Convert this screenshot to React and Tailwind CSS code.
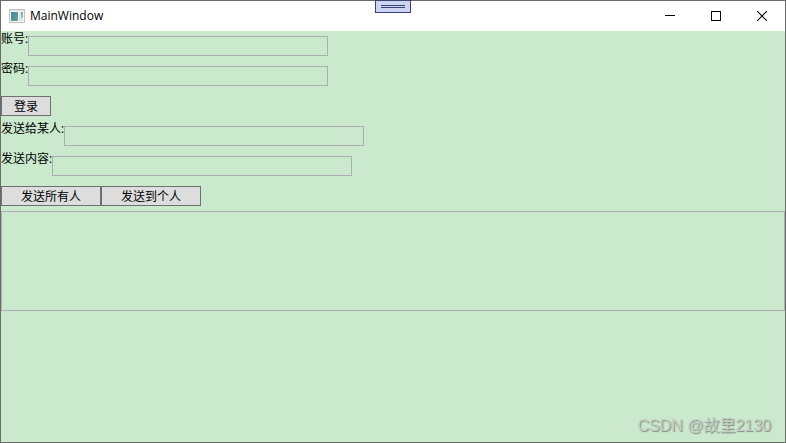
const FIELDS = {
  account:  { label: '账号:',       type: 'text' },
  password: { label: '密码:',       type: 'text' },
  receiver: { label: '发送给某人:', type: 'text' },
  content:  { label: '发送内容:',   type: 'text' },
}

function Field({ id }) {
  const { label, type } = FIELDS[id]
  return (
    <div className="flex items-start">
      <label htmlFor={id} className="shrink-0 leading-4">{label}</label>
      <input
        id={id}
        type={type}
        className="my-[5px] h-5 w-[300px] min-w-0 border border-[#abadb3] bg-transparent px-1 outline-none focus:border-[#569de5]"
      />
    </div>
  )
}

function PushButton({ className, children }) {
  return (
    <button
      type="button"
      className={`h-5 border border-[#707070] bg-[#dddddd] pt-px text-center leading-4 hover:bg-[#bee6fd] ${className}`}
    >
      {children}
    </button>
  )
}

function AppIcon() {
  return (
    <svg width="16" height="14" viewBox="0 0 16 14" shapeRendering="crispEdges" aria-hidden="true">
      <defs>
        <linearGradient id="pane" x1="0" y1="0" x2="1" y2="1">
          <stop offset="0" stopColor="#4a7fae" />
          <stop offset="1" stopColor="#62ad86" />
        </linearGradient>
        <linearGradient id="side" x1="0" y1="0" x2="0" y2="1">
          <stop offset="0" stopColor="#7d9fc0" />
          <stop offset="1" stopColor="#9cc8ac" />
        </linearGradient>
      </defs>
      <rect x="0.5" y="0.5" width="15" height="13" fill="#f6f6f6" stroke="#c0c2c4" />
      <rect x="1" y="1" width="14" height="1" fill="#dcdee0" />
      <rect x="2" y="3" width="7" height="9" fill="url(#pane)" />
      <rect x="10" y="3" width="4" height="9" fill="#dfe5e6" />
      <rect x="12" y="3" width="2" height="6" fill="url(#side)" />
    </svg>
  )
}

function TitleBar() {
  return (
    <header className="flex h-[30px] items-center bg-white">
      <div className="flex flex-1 items-center gap-[5px] pb-px pl-2">
        <AppIcon />
        <h1 className="text-xs leading-4">MainWindow</h1>
      </div>
      <button type="button" aria-label="Minimize" className="flex h-full w-[46px] items-center justify-center hover:bg-[#e5e5e5]">
        <svg width="10" height="10" viewBox="0 0 10 10" shapeRendering="crispEdges">
          <path d="M0 4.5h10" stroke="#000" />
        </svg>
      </button>
      <button type="button" aria-label="Maximize" className="flex h-full w-[46px] items-center justify-center hover:bg-[#e5e5e5]">
        <svg width="10" height="10" viewBox="0 0 10 10" shapeRendering="crispEdges">
          <rect x="0.5" y="0.5" width="9" height="9" fill="none" stroke="#000" />
        </svg>
      </button>
      <button type="button" aria-label="Close" className="flex h-full w-[46px] items-center justify-center hover:bg-[#e81123]">
        <svg width="10" height="10" viewBox="0 0 10 10">
          <path d="M0 0L10 10M10 0L0 10" stroke="#000" strokeWidth="1.1" />
        </svg>
      </button>
    </header>
  )
}

export default function App() {
  return (
    <div className="relative flex min-h-screen flex-col border border-[#6b6b6b] bg-[#cae9cd] font-['Open_Sans','Noto_Sans_CJK_SC',sans-serif] text-xs text-black">
      <TitleBar />

      {/* 调试工具栏手柄 */}
      <div className="absolute -top-px left-1/2 flex h-[13px] w-9 -translate-x-1/2 flex-col items-center justify-center gap-px border border-[#3b4479] bg-[#ccd5f0]">
        <span className="h-px w-6 bg-[#3b4479]" />
        <span className="h-px w-6 bg-[#3b4479]" />
      </div>

      <main className="flex flex-1 flex-col">
        <Field id="account" />
        <Field id="password" />
        <div className="flex py-[5px]">
          <PushButton className="w-[50px]">登录</PushButton>
        </div>
        <Field id="receiver" />
        <Field id="content" />
        <div className="flex py-[5px]">
          <PushButton className="w-[100px]">发送所有人</PushButton>
          <PushButton className="w-[100px]">发送到个人</PushButton>
        </div>
        <textarea
          aria-label="消息"
          className="block h-[100px] w-full resize-none border border-[#abadb3] bg-transparent p-1 outline-none"
        />
        <p className="mt-auto self-end pr-[14px] pb-1 font-['Liberation_Sans','Noto_Sans_CJK_SC',sans-serif] text-base leading-6 text-[#c3cdc4] [text-shadow:1px_1px_1px_#7b8a7e]">
          CSDN @故里2130
        </p>
      </main>
    </div>
  )
}
